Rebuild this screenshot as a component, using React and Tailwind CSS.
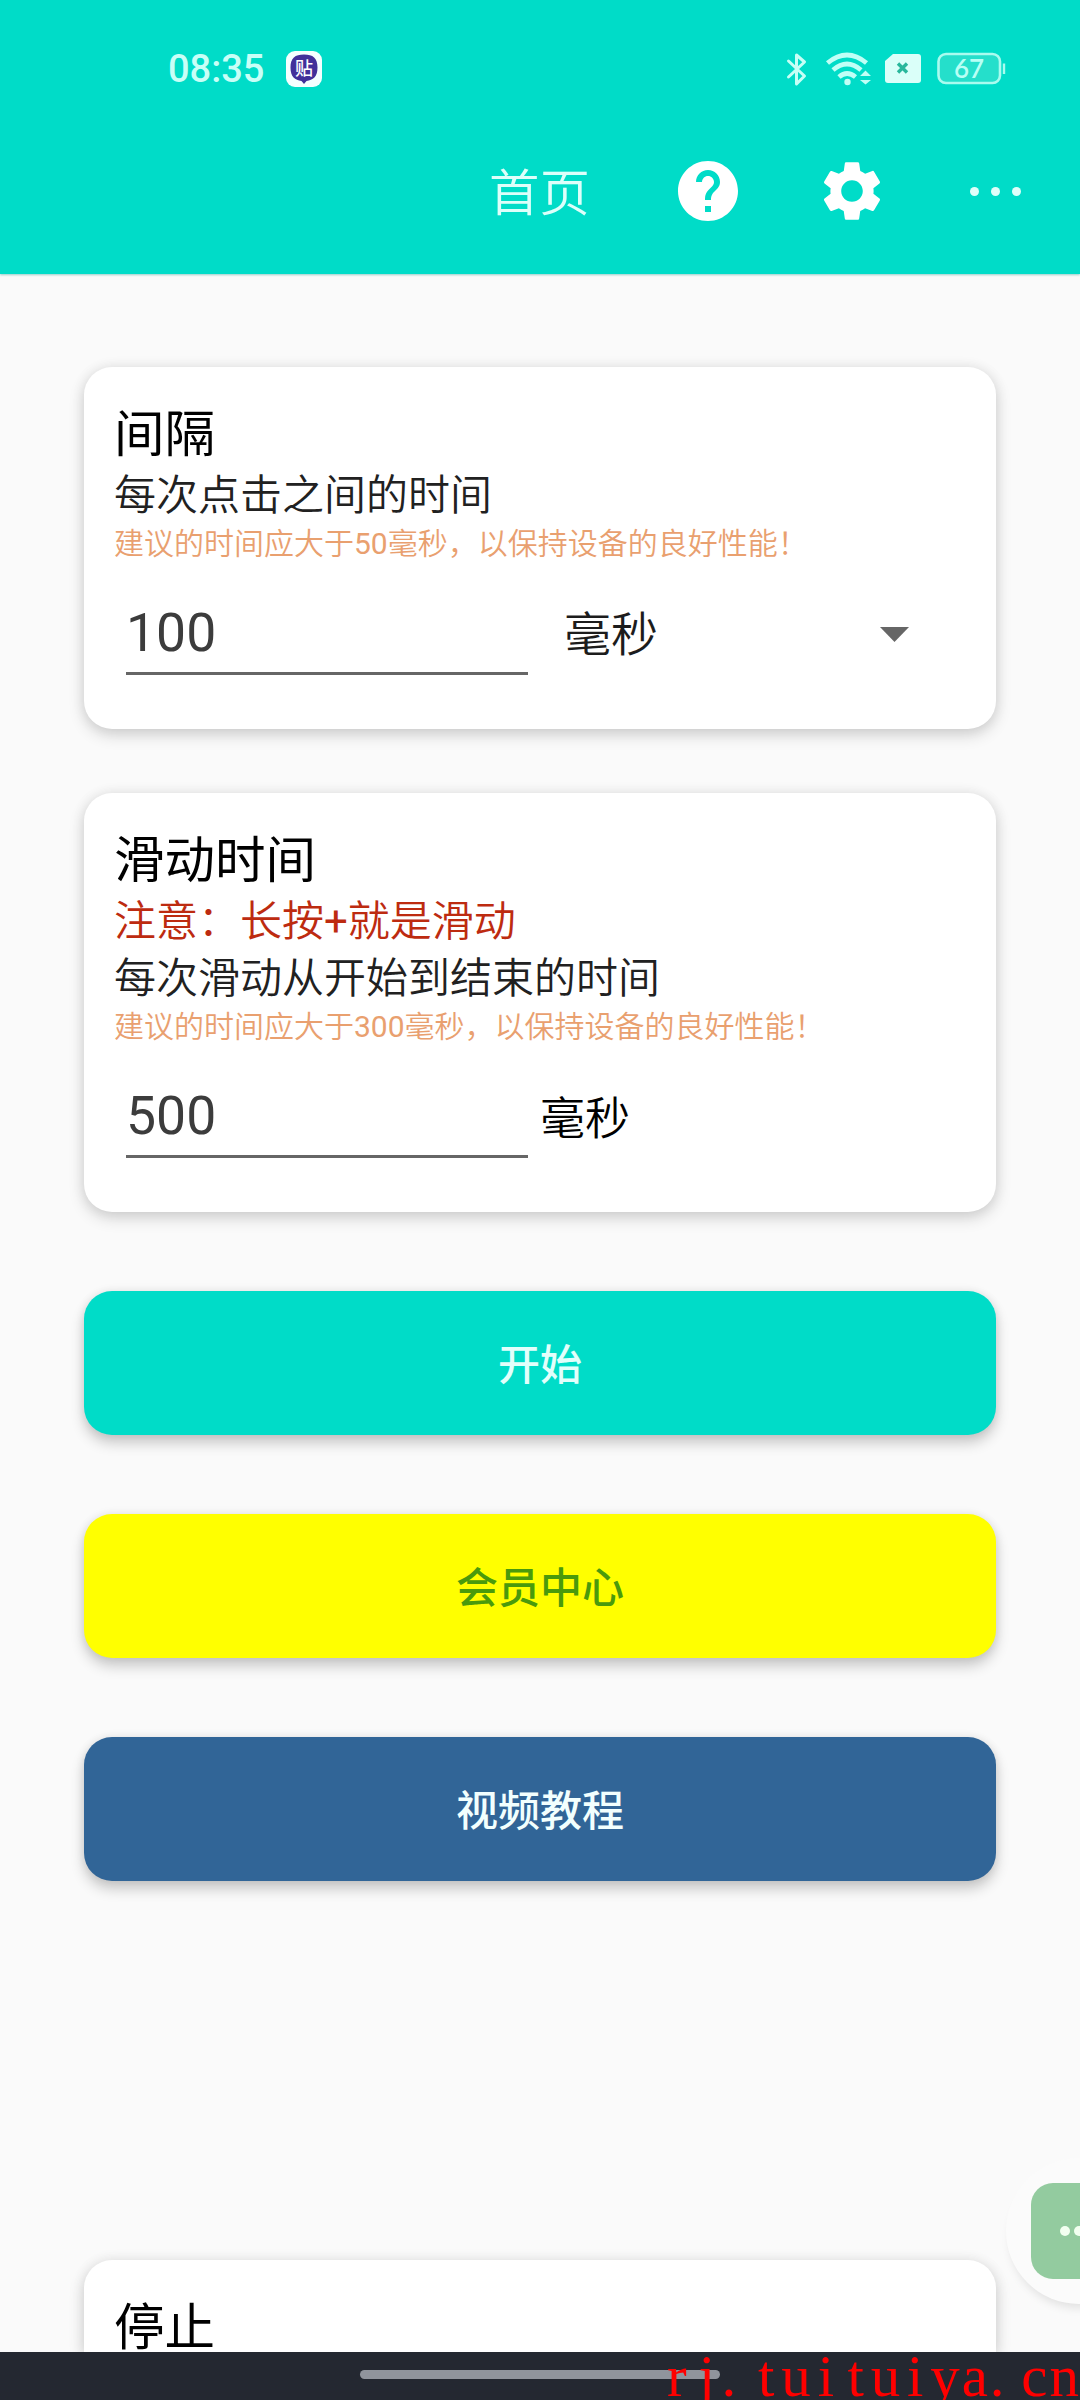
import React from "react";
import { MdHelp, MdSettings } from "react-icons/md";

const CJK = "font-['Noto_Sans_CJK_SC',sans-serif]";
const MIXED = "font-['Roboto','Noto_Sans_CJK_SC',sans-serif]";
const CARD =
  "mx-[84px] shrink-0 bg-white pt-[32px] pl-[30px] shadow-[0_6px_16px_rgba(0,0,0,0.16),0_0_14px_rgba(0,0,0,0.07)]";

function StatusIcons() {
  return (
    <svg className="ml-[462px] h-10 w-[226px] shrink-0" viewBox="0 0 226 40" fill="none">
      <path
        d="M4.500 12 L20.500 27 L12.500 35 V6 L20.500 13 L4.500 28"
        stroke="#c6fff6"
        strokeWidth="3"
        strokeLinejoin="round"
        strokeLinecap="round"
      />
      <g stroke="#c0fff6" strokeWidth="4.8">
        <path d="M43.500 14 Q63 -2 82.500 14" />
        <path d="M49 21 Q63 9 77 21" />
        <path d="M55 28 Q63 21 71.500 28" />
      </g>
      <circle cx="63.5" cy="33" r="3.2" fill="#c0fff6" />
      <path d="M76 27 L81.500 21.500 L87 27Z M76 31 L81.500 35.500 L87 31Z" fill="#c0fff6" />
      <path d="M109 5 H134 Q137 5 137 8 V31 Q137 34 134 34 H104 Q101 34 101 31 V12Z" fill="#dafff9" />
      <path d="M114 14.500 L123 23.500 M123 14.500 L114 23.500" stroke="#28b79c" strokeWidth="3.4" />
      <rect x="154.500" y="5" width="61.500" height="29" rx="7.500" fill="#25dfcb" stroke="#a9fbef" strokeWidth="2.600" />
      <path d="M220 14.500 V25" stroke="#a9fbef" strokeWidth="2.400" />
      <text x="185" y="29" textAnchor="middle" fontFamily="Lato, sans-serif" fontSize="26" fontWeight="600" fill="#b8fff5">
        67
      </text>
    </svg>
  );
}

function AppBadge() {
  return (
    <svg className="ml-[21px] size-9 shrink-0" viewBox="0 0 36 36">
      <rect width="36" height="36" rx="9" fill="#f4ffff" />
      <path d="M18 3.500 C27 3.500 31.500 7 31.500 16.500 C31.500 26 27 29 20.500 30 L18 33 L15.500 30 C9 29 4.500 26 4.500 16.500 C4.500 7 9 3.500 18 3.500Z" fill="#41309a" />
      <text x="18" y="23.500" textAnchor="middle" fontFamily="'Noto Sans CJK SC', sans-serif" fontSize="18" fontWeight="500" fill="#fff">
        贴
      </text>
    </svg>
  );
}

function Header() {
  return (
    <header className="h-[274px] shrink-0 bg-[#00dcc8] shadow-[0_1px_2px_rgba(0,140,130,0.4)]">
      <div className="flex h-[138px] items-center pl-[168px]">
        <span className="w-[97px] font-['Roboto',sans-serif] text-[38px] leading-none font-medium whitespace-nowrap text-[#c8fff7]">
          08:35
        </span>
        <AppBadge />
        <StatusIcons />
      </div>
      <div className="flex h-[106px] items-center pl-[489px] text-white">
        <span className={`${CJK} -mt-1 w-[183px] text-[50.5px] leading-[60px] font-[350] text-[#ddfffa]`}>首页</span>
        <MdHelp size={72} />
        <MdSettings size={72} className="ml-[72px]" />
        <div className="ml-[82px] flex gap-[12px]">
          {[0, 1, 2].map((i) => (
            <i key={i} className="size-[9px] rounded-full bg-[#dffffa]" />
          ))}
        </div>
      </div>
    </header>
  );
}

function Title({ children }) {
  return <h2 className={`${CJK} h-[67px] text-[50.5px] leading-[62px] font-normal text-black`}>{children}</h2>;
}

function Line({ red, children }) {
  return (
    <p className={`${MIXED} h-[57px] text-[42px] leading-[60px] font-[350] ${red ? "text-[#bd2b10]" : "text-[#212121]"}`}>
      {children}
    </p>
  );
}

function Hint({ amount }) {
  return (
    <p className={`${MIXED} h-[39px] text-[30px] leading-[42px] font-[350] whitespace-nowrap text-[#e9a06f]`}>
      建议的时间应大于<span className="font-normal">{amount}</span>毫秒，以保持设备的良好性能！
    </p>
  );
}

function Field({ value }) {
  return (
    <div className="ml-3 h-[113px] w-[402px] border-b-[3px] border-[#666] pt-[39px] font-['Roboto',sans-serif] text-[53.5px] leading-[64px] text-[#3c3c3c]">
      {value}
    </div>
  );
}

function Action({ className, children }) {
  return (
    <button
      className={`${CJK} mx-[84px] h-36 shrink-0 rounded-[28px] pb-1 text-[42px] font-medium shadow-[0_8px_14px_rgba(0,0,0,0.2),0_0_10px_rgba(0,0,0,0.08)] ${className}`}
    >
      {children}
    </button>
  );
}

function Watermark() {
  return (
    <div className="absolute top-0 left-[662px] flex h-12 w-[418px] items-end font-['Liberation_Serif',serif] text-[59px] leading-[48px] text-[#ff0000]">
      {"rj.tuituiya.cn".split("").map((c, i) => (
        <span key={i} className={`w-[29.8px] shrink-0 ${c === "." ? "text-left" : "text-center"}`}>
          {c}
        </span>
      ))}
    </div>
  );
}

export default function App() {
  return (
    <div className="relative flex h-[2400px] w-[1080px] flex-col overflow-hidden bg-[#fafafa]">
      <Header />

      <section className={`${CARD} mt-[93px] h-[362px] rounded-[28px]`}>
        <Title>间隔</Title>
        <Line>每次点击之间的时间</Line>
        <Hint amount="50" />
        <div className="flex">
          <Field value="100" />
          <span className={`${CJK} mt-[38px] ml-9 w-[316px] text-[47px] leading-[62px] font-[350] text-[#1c1c1c]`}>毫秒</span>
          <svg className="mt-[65px] h-[15px] w-[29px]" viewBox="0 0 29 15">
            <path d="M0 0H29L14.500 15Z" fill="#666" />
          </svg>
        </div>
      </section>

      <section className={`${CARD} mt-16 h-[419px] rounded-[28px]`}>
        <Title>滑动时间</Title>
        <Line red>
          注意：长按<span className="font-normal">+</span>就是滑动
        </Line>
        <Line>每次滑动从开始到结束的时间</Line>
        <Hint amount="300" />
        <div className="flex">
          <Field value="500" />
          <span className={`${CJK} mt-[40px] ml-3 text-[45px] leading-[62px] font-[350] text-black`}>毫秒</span>
        </div>
      </section>

      <Action className="mt-[79px] bg-[#00dcc8] text-[#e2fffb]">开始</Action>
      <Action className="mt-[79px] bg-[#ffff00] text-[#4a9a0c]">会员中心</Action>
      <Action className="mt-[79px] bg-[#316597] text-[#f2fffe]">视频教程</Action>

      <section className={`${CARD} mt-[379px] h-[92px] rounded-t-[28px]`}>
        <Title>停止</Title>
      </section>

      <footer className="relative h-12 shrink-0 overflow-hidden bg-[#242831] pt-[18px]">
        <div className="mx-auto h-[9px] w-[360px] rounded-full bg-[#90949c]" />
        <Watermark />
      </footer>

      <div className="absolute top-[2158px] left-[1006px] flex size-[146px] items-center rounded-full bg-[#fbfbfb] pl-[25px] shadow-[0_8px_10px_-4px_rgba(0,0,0,0.1)]">
        <div className="flex size-24 items-center gap-[4px] rounded-[22px] bg-[#93cb9f] pl-[29px]">
          <i className="size-[10px] rounded-full bg-[#f2fff0]" />
          <i className="size-[10px] rounded-full bg-[#f2fff0]" />
        </div>
      </div>
    </div>
  );
}
